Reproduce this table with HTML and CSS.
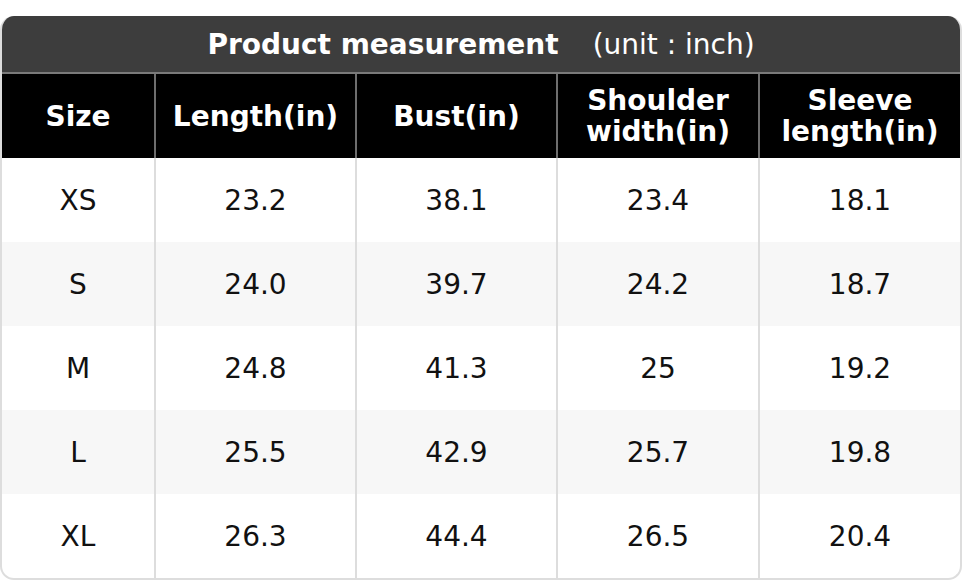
FILE: index.html
```html
<!DOCTYPE html>
<html>
<head>
<meta charset="utf-8">
<link rel="stylesheet" href="styles.css">
</head>
<body>
<div class="wrap">
  <table class="chart">
    <colgroup>
      <col class="c1"><col class="c2"><col class="c3"><col class="c4"><col class="c5">
    </colgroup>
    <thead>
      <tr class="title-row">
        <th colspan="5"><span class="title">Product measurement</span><span class="unit">(unit : inch)</span></th>
      </tr>
      <tr class="head-row">
        <th>Size</th>
        <th>Length(in)</th>
        <th>Bust(in)</th>
        <th>Shoulder<br>width(in)</th>
        <th>Sleeve<br>length(in)</th>
      </tr>
    </thead>
    <tbody>
      <tr><td>XS</td><td>23.2</td><td>38.1</td><td>23.4</td><td>18.1</td></tr>
      <tr class="alt"><td>S</td><td>24.0</td><td>39.7</td><td>24.2</td><td>18.7</td></tr>
      <tr><td>M</td><td>24.8</td><td>41.3</td><td>25</td><td>19.2</td></tr>
      <tr class="alt"><td>L</td><td>25.5</td><td>42.9</td><td>25.7</td><td>19.8</td></tr>
      <tr><td>XL</td><td>26.3</td><td>44.4</td><td>26.5</td><td>20.4</td></tr>
    </tbody>
  </table>
</div>
</body>
</html>
```
FILE: styles.css
```css
html, body {
  margin: 0;
  padding: 0;
  background: #ffffff;
}
body {
  font-family: "DejaVu Sans", "Liberation Sans", sans-serif;
}
.wrap {
  padding-top: 16px;
  width: 962px;
}
.chart {
  width: 962px;
  border-collapse: separate;
  border-spacing: 0;
  border: 2px solid #dddddd;
  border-top: none;
  border-radius: 14px;
  overflow: hidden;
  table-layout: fixed;
  box-sizing: border-box;
}
.c1 { width: 152px; }
.c2 { width: 201px; }
.c3 { width: 201px; }
.c4 { width: 202px; }
.c5 { width: 202px; }
.title-row th {
  background: #3d3d3d;
  color: #ffffff;
  height: 56px;
  padding: 0;
  font-size: 28px;
  border-bottom: 2px solid #7a7a7a;
  text-align: center;
}
.title {
  font-weight: bold;
}
.unit {
  font-weight: normal;
  margin-left: 34px;
}
.head-row th {
  background: #000000;
  color: #ffffff;
  font-weight: bold;
  font-size: 28px;
  line-height: 31px;
  height: 84px;
  padding: 0;
  text-align: center;
  border-left: 2px solid #6e6e6e;
}
.head-row th:first-child {
  border-left: none;
}
tbody td {
  height: 84px;
  padding: 0;
  text-align: center;
  font-size: 28px;
  color: #111111;
  border-left: 2px solid #dddddd;
}
tbody td:first-child {
  border-left: none;
}
tbody tr.alt td {
  background: #f7f7f7;
}
```
